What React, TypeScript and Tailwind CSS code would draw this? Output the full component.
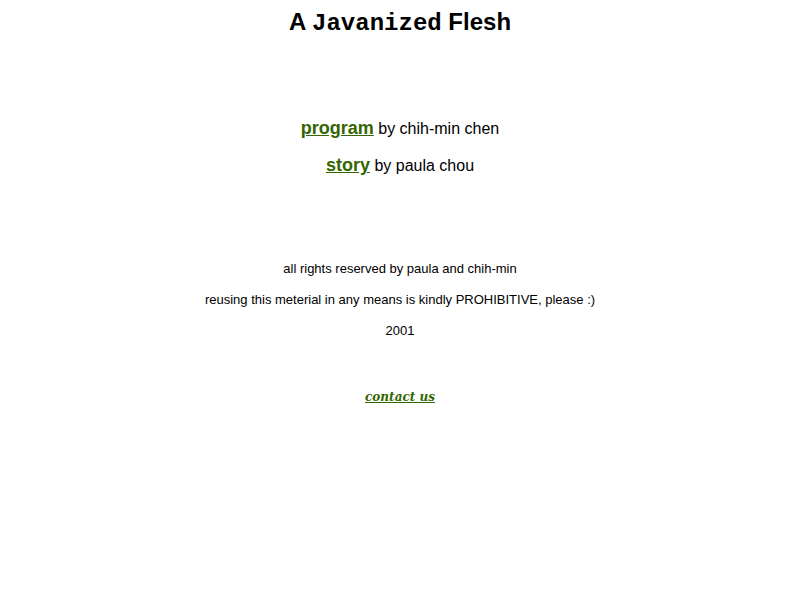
import React from "react";

export default function App() {
  return (
    <div className="bg-white w-[800px] h-[600px] text-black text-center font-['Liberation_Sans',Arial,sans-serif]">
      <h1 className="pt-[8px] text-[24px] leading-[28px] font-bold">
        A <span className="font-['Liberation_Mono','Courier_New',monospace]">Javanized</span> Flesh
      </h1>
      <div className="mt-[80px] text-[16px] leading-[20px]">
        <p>
          <a href="#" className="text-[#336600] underline font-bold text-[18px]">program</a> by chih-min chen
        </p>
        <p className="mt-[16px]">
          <a href="#" className="text-[#336600] underline font-bold text-[18px]">story</a> by paula chou
        </p>
      </div>
      <div className="mt-[85px] text-[13px] leading-[16px]">
        <p>all rights reserved by paula and chih-min</p>
        <p className="mt-[15px]">reusing this meterial in any means is kindly PROHIBITIVE, please :)</p>
        <p className="mt-[15px]">2001</p>
      </div>
      <p className="mt-[50px] text-[13px] leading-[16px]">
        <a href="#" className="text-[#336600] underline font-bold italic text-[12px] font-['DejaVu_Serif',Georgia,serif]">contact us</a>
      </p>
    </div>
  );
}
